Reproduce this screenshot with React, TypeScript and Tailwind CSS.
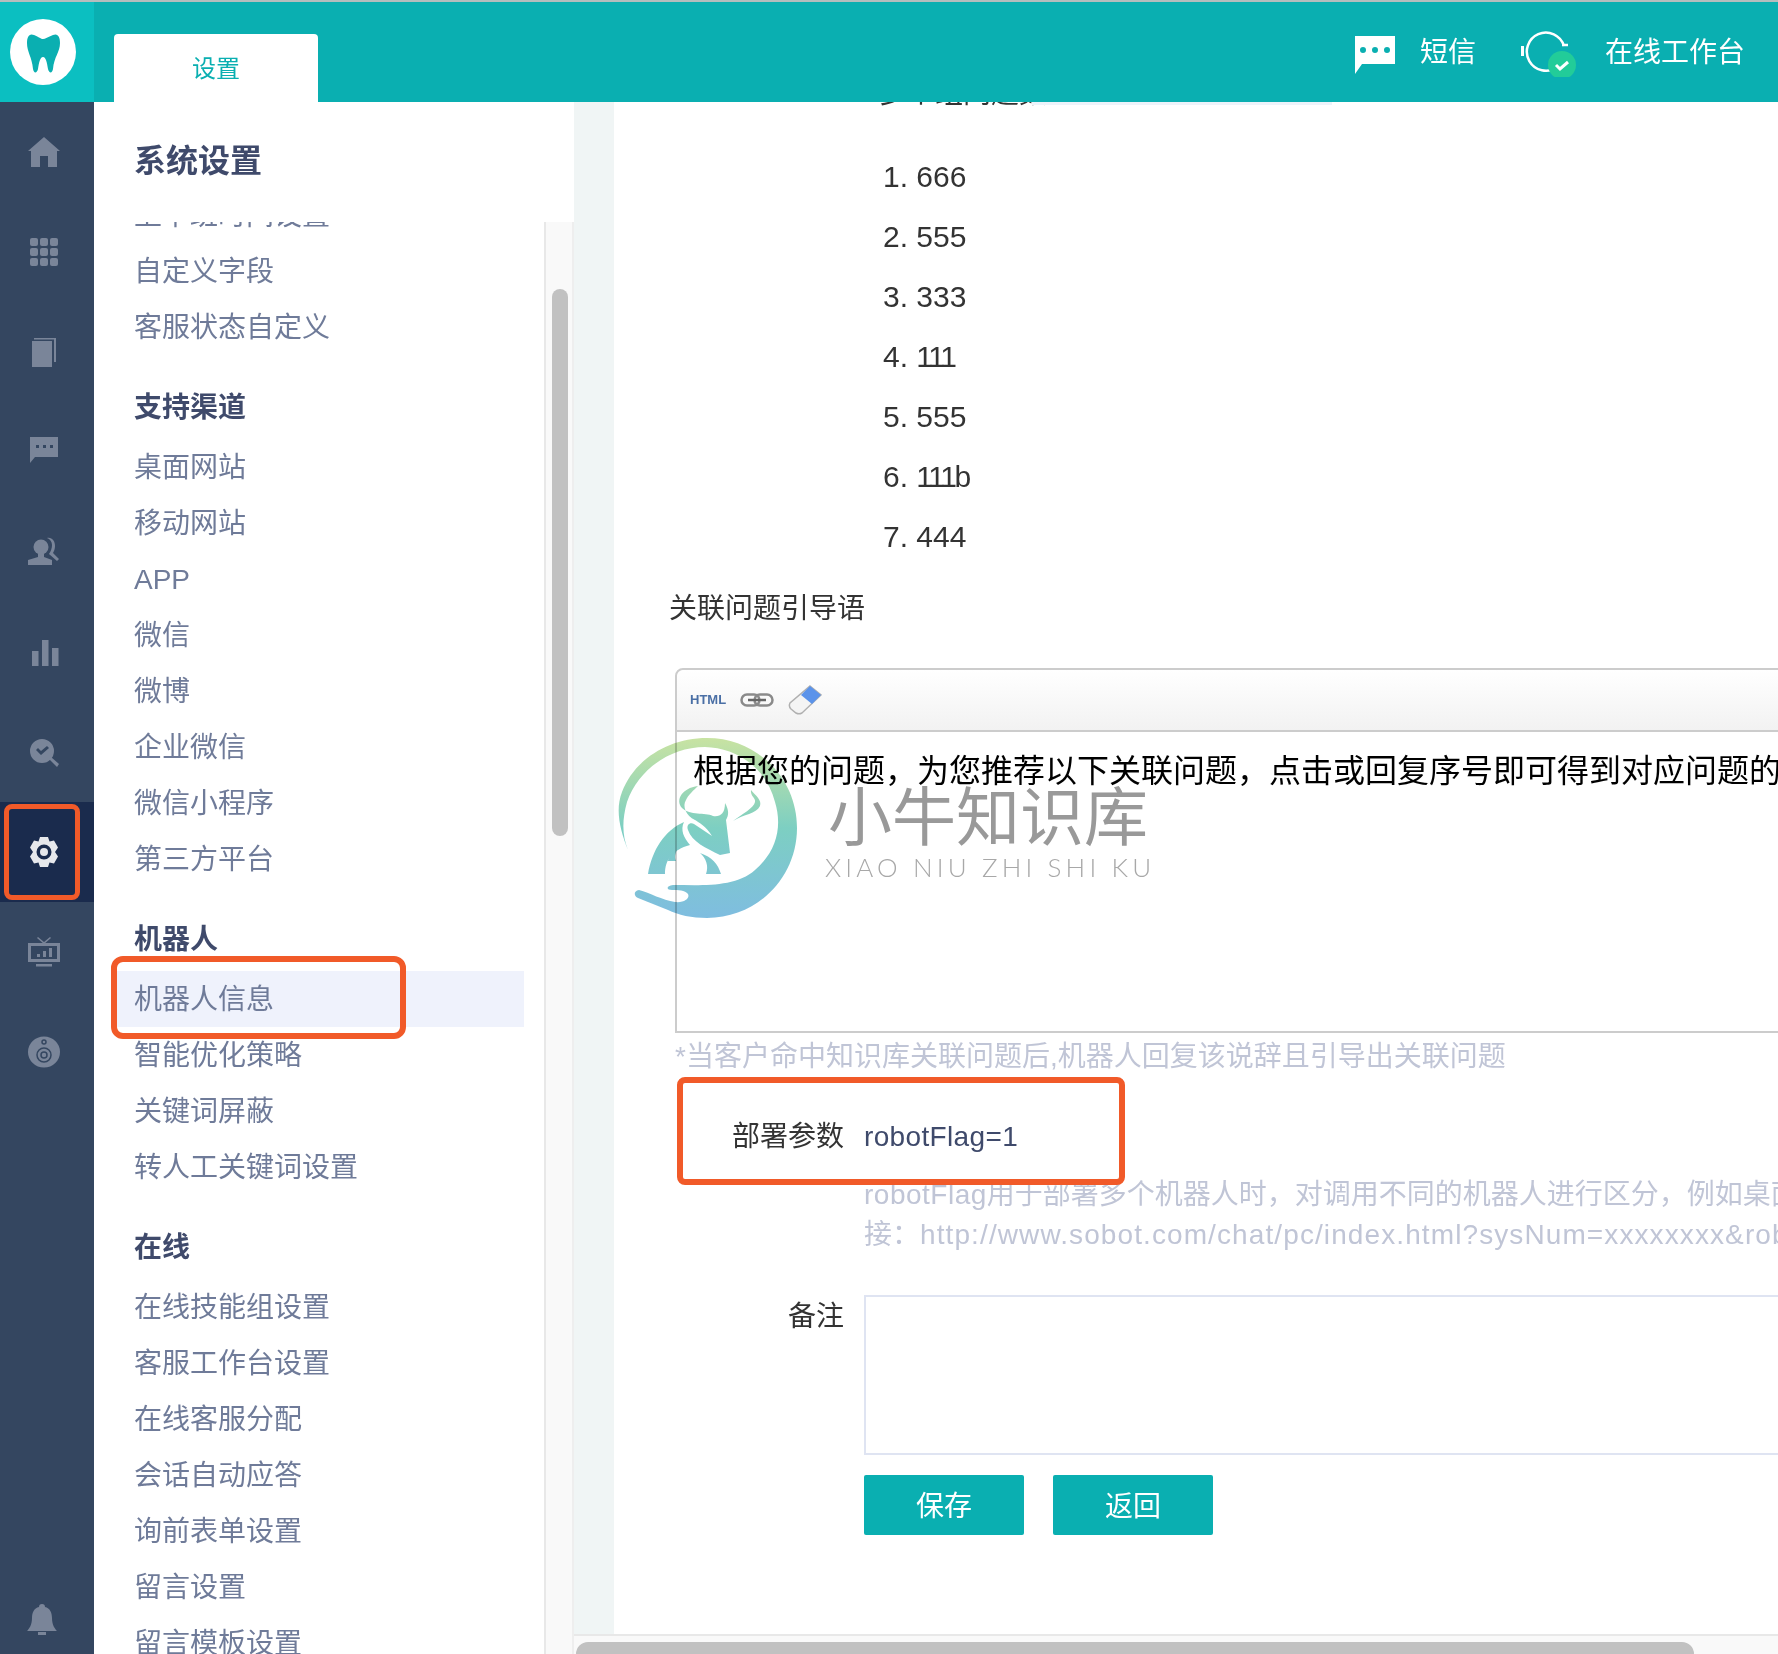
import React from 'react';

const groups = [
  { items: ['上下班时间设置', '自定义字段', '客服状态自定义'] },
  { title: '支持渠道', items: ['桌面网站', '移动网站', 'APP', '微信', '微博', '企业微信', '微信小程序', '第三方平台'] },
  { title: '机器人', items: ['机器人信息', '智能优化策略', '关键词屏蔽', '转人工关键词设置'] },
  { title: '在线', items: ['在线技能组设置', '客服工作台设置', '在线客服分配', '会话自动应答', '询前表单设置', '留言设置', '留言模板设置'] },
];

const questions = ['666', '555', '333', '111', '555', '111b', '444'];

function NavIcon({ children, active }: { children: React.ReactNode; active?: boolean }) {
  return (
    <div className={active ? 'relative h-[100px] flex items-center justify-center pr-[6px] bg-[#1a2b4d] text-[#e6e8ec]' : 'relative h-[100px] flex items-center justify-center pr-[6px] text-[#7a8599]'}>
      <svg viewBox="0 0 32 32" className="size-8" fill="currentColor">{children}</svg>
      {active && <div className="absolute left-[4px] top-[2px] w-[76px] h-[96px] border-[5px] border-[#f15a29] rounded-lg" />}
    </div>
  );
}

function Sidebar() {
  return (
    <aside className="w-[94px] shrink-0 bg-[#344660] flex flex-col">
      <NavIcon><path d="M16 1 32 15h-3v16h-9V20h-8v11H3V15H0Z" /></NavIcon>
      <NavIcon>
        <rect x="2" y="2" width="8" height="8" rx="2" /><rect x="12" y="2" width="8" height="8" rx="2" /><rect x="22" y="2" width="8" height="8" rx="2" />
        <rect x="2" y="12" width="8" height="8" rx="2" /><rect x="12" y="12" width="8" height="8" rx="2" /><rect x="22" y="12" width="8" height="8" rx="2" />
        <rect x="2" y="22" width="8" height="8" rx="2" /><rect x="12" y="22" width="8" height="8" rx="2" /><rect x="22" y="22" width="8" height="8" rx="2" />
      </NavIcon>
      <NavIcon><path d="M4 5h20v26H4Z" /><path d="M6 2h22v24h-2V3.500H6Z" /></NavIcon>
      <NavIcon><path d="M2 1h28v20H7l-5 6Z" /><g fill="#344660"><rect x="8" y="9" width="3" height="3" /><rect x="15" y="9" width="3" height="3" /><rect x="22" y="9" width="3" height="3" /></g></NavIcon>
      <NavIcon>
        <circle cx="13" cy="11" r="7.500" />
        <path d="M10 18h6v3l8 3v5H0v-5l10-3Z" />
        <path d="M19 2c5-1 8 3 8 8 0 3-1 5-2 7l6 6-2 2-8-7c2-3 3-6 3-9 0-3-2-6-5-7Z" />
      </NavIcon>
      <NavIcon><rect x="4" y="15" width="6.500" height="15" /><rect x="14" y="4" width="6.500" height="26" /><rect x="24" y="12" width="6.500" height="18" /></NavIcon>
      <NavIcon>
        <path fillRule="evenodd" d="M14 3a12 12 0 1 0 0 24 12 12 0 0 0 0-24Zm-6 11 2-2 3 3 6-5 2 2-8 7Z" />
        <path d="m21 23 2-2 8 7-2 3Z" />
      </NavIcon>
      <NavIcon active>
        <path fillRule="evenodd" d="M12 1h8l1.500 4.500 4.500-1 4 7-3 4.500 3 4.500-4 7-4.500-1L20 31h-8l-1.500-4.500-4.500 1-4-7 3-4.500-3-4.500 4-7 4.500 1ZM16 8.500a7.500 7.500 0 1 0 0 15 7.500 7.500 0 0 0 0-15Z" />
        <circle cx="16" cy="16" r="4" />
      </NavIcon>
      <NavIcon>
        <path fillRule="evenodd" d="M0 7h32v19H0Zm3 3v13h26V10Z" />
        <path d="m10 1 6 5 6-5 1 1-7 6-7-6Z" /><rect x="8" y="28" width="16" height="2.500" />
        <rect x="9" y="18" width="3" height="3" /><rect x="15" y="15" width="3" height="6" /><rect x="21" y="12" width="3" height="9" />
      </NavIcon>
      <NavIcon>
        <ellipse cx="16" cy="16" rx="16" ry="15.500" />
        <g fill="none" stroke="#344660" strokeWidth="1.500">
          <circle cx="16" cy="19" r="7" /><circle cx="16" cy="19" r="3" /><circle cx="16" cy="6" r="2" />
        </g>
      </NavIcon>
      <div className="mt-auto mb-[4px] h-[60px] flex items-center pl-[26px] text-[#7a8599]">
        <svg viewBox="0 0 32 32" className="size-8" fill="currentColor">
          <path d="M16 0c2 0 3 1 3 3 5 1 7 6 7 11 0 7 3 11 5 13H1c2-2 5-6 5-13 0-5 2-10 7-11 0-2 1-3 3-3Z" />
          <rect x="12" y="28" width="8" height="3" />
        </svg>
      </div>
    </aside>
  );
}

function SettingsMenu() {
  return (
    <div className="w-[480px] shrink-0 bg-white flex flex-col overflow-hidden">
      <div className="h-[120px] shrink-0 pl-10 pt-[39px] text-[32px] leading-10 font-bold text-[#3f4a6b]">系统设置</div>
      <div className="flex-1 flex min-h-0">
        <div className="w-[450px] px-5 overflow-hidden">
          <div className="-mt-[35px]">
            {groups.map((g, i) => (
              <div key={i} className={g.title ? 'mt-9' : ''}>
                {g.title && <div className="h-8 mb-4 pl-5 text-[28px] leading-[34px] font-bold text-[#3f4a6b]">{g.title}</div>}
                {g.items.map((item) => (
                  <div key={item} className={item === '机器人信息' ? 'relative h-14 pl-5 text-[28px] leading-[58px] text-[#6f7b99] bg-[#eff2fc]' : 'h-14 pl-5 text-[28px] leading-[58px] text-[#6f7b99]'}>
                    {item}
                    {item === '机器人信息' && <div className="absolute -left-[3px] -top-[15px] w-[295px] h-[83px] border-[6px] border-[#f15a29] rounded-xl" />}
                  </div>
                ))}
              </div>
            ))}
          </div>
        </div>
        <div className="w-[30px] bg-[#f9f9f9] border-l-2 border-r-2 border-l-[#e8e8e8] border-r-[#eeeeee] pt-[67px] pl-[6px]">
          <div className="w-4 h-[547px] rounded-full bg-[#c1c1c1]" />
        </div>
      </div>
    </div>
  );
}

function Main() {
  return (
    <main className="flex-1 min-w-0 flex flex-col bg-[#f0f5f5]">
      <div className="flex-1 min-h-0 pl-10">
        <div className="relative h-full bg-white overflow-hidden text-[28px] text-[#333333]">
          <div className="absolute left-[418px] top-0 w-[300px] h-[3px] bg-[#edf3fa]" />
          <div className="-mt-10 ml-[265px] h-[60px] leading-[64px] mb-[25px] whitespace-nowrap">多个组问题数</div>
          <ol className="ml-[269px] text-[30px]">
            {questions.map((q, i) => (
              <li key={i} className="h-[60px] leading-[60px]">
                {i + 1}. <span className={q.startsWith('111') ? 'tracking-[-2.500px]' : ''}>{q}</span>
              </li>
            ))}
          </ol>
          <div className="mt-5 ml-[55px] h-10 leading-[44px]">关联问题引导语</div>
          <div className="mt-[41px] ml-[61px] w-[1200px] h-[365px] border-2 border-[#cccccc] rounded-tl-lg">
            <div className="h-[62px] flex items-center pl-[13px] bg-gradient-to-b from-white to-[#f2f2f2] border-b-2 border-[#cccccc] rounded-tl-lg">
              <span className="text-[13px] leading-4 font-bold text-[#4a6fa5]">HTML</span>
              <svg viewBox="0 0 34 14" className="ml-[14px] w-[34px] h-[14px]" fill="none" stroke="#8a8a8a" strokeWidth="2.500">
                <rect x="1.500" y="1.500" width="18" height="11" rx="5.500" />
                <rect x="14.500" y="1.500" width="18" height="11" rx="5.500" />
                <path d="M8 7h18" stroke="#666666" />
              </svg>
              <svg viewBox="0 0 34 30" className="ml-[14px] w-[34px] h-[30px]">
                <path d="M22 1 33 10 14 28c-2 1-4 1-6 0l-5-4c-2-2-2-4-1-6Z" fill="#f4f4f4" stroke="#b0b0b0" strokeWidth="1.500" />
                <path d="M22 1 33 10 24 19 13 10Z" fill="#5b93ea" />
              </svg>
            </div>
            <div className="pl-4 pt-[19px] text-[32px] leading-10 text-black whitespace-nowrap">根据您的问题，为您推荐以下关联问题，点击或回复序号即可得到对应问题的答案</div>
          </div>
          <div className="mt-[2px] ml-[61px] h-10 leading-[44px] text-[#c0c5d6] whitespace-nowrap">*当客户命中知识库关联问题后,机器人回复该说辞且引导出关联问题</div>
          <div className="relative mt-[30px] h-[60px] pt-[3px] flex items-center">
            <div className="w-[230px] text-right">部署参数</div>
            <div className="ml-5 text-[#3f4a6b] tracking-[0.350px]">robotFlag=1</div>
            <div className="absolute left-[63px] -top-[28px] w-[448px] h-[108px] border-[6px] border-[#f15a29] rounded-lg" />
          </div>
          <div className="mt-[10px] ml-[250px] leading-10 text-[#c0c5d6] whitespace-nowrap">
            <div><span className="tracking-[0.500px]">robotFlag</span>用于部署多个机器人时，对调用不同的机器人进行区分，例如桌面网站链</div>
            <div>接：<span className="tracking-[1.100px]">http://www.sobot.com/chat/pc/index.html?sysNum=xxxxxxxx&amp;robotFlag=1</span></div>
          </div>
          <div className="mt-[40px] flex">
            <div className="w-[230px] shrink-0 text-right leading-[44px]">备注</div>
            <div className="ml-5 w-[1000px] shrink-0 h-[160px] border-2 border-[#dfe4f2]" />
          </div>
          <div className="mt-5 ml-[250px] flex gap-[29px]">
            <button className="w-40 h-[60px] pt-1 rounded-[2px] bg-[#0aafb1] text-white">保存</button>
            <button className="w-40 h-[60px] pt-1 rounded-[2px] bg-[#0aafb1] text-white">返回</button>
          </div>
        </div>
      </div>
      <div className="h-5 shrink-0 bg-[#f9f9f9] border-t-2 border-[#e8e8e8] pt-[6px] pl-[2px]">
        <div className="w-[1118px] h-3 rounded-t-full bg-[#c1c1c1]" />
      </div>
    </main>
  );
}

function Watermark() {
  return (
    <div className="absolute left-[610px] top-[730px] w-[560px] h-[200px] pointer-events-none">
      <svg viewBox="0 0 200 200" className="absolute left-0 top-0 size-[200px] mix-blend-multiply">
        <defs>
          <linearGradient id="wm" gradientUnits="userSpaceOnUse" x1="0" y1="8" x2="0" y2="188">
            <stop offset="0" stopColor="#c8e3a2" />
            <stop offset="0.5" stopColor="#7dcfc2" />
            <stop offset="1" stopColor="#7fbde0" />
          </linearGradient>
        </defs>
        <g fill="url(#wm)">
          <path d="M18 120C10 100 5 80 12 62 24 30 58 8 97 8c50 0 90 40 90 90s-40 90-90 90c-15 0-29-3-39-8l-30-12c-4-2-5-7 1-8 11 3 23 10 36 12 10 1 15-4 13-8-3-4-10-4-16-4s-6-4 1-5c27 0 62 3 82-15 23-20 27-45 20-68C155 35 125 18 95 17 60 17 28 40 17 72c-5 18-5 33 1 48Z" />
          <path d="M88 56C72 58 65 70 72 78c8 8 23 4 31 8 7 1 12-2 12-13 4 7 4 12 1 17l4 33-10 2c-14-7-28-13-32-25-2-5 2-8 6-6 6 4 12 8 18 12-6-10-14-14-17-16-9-4-13-14-9-20 2-5 8-10 12-14Z" />
          <path d="M74 92C55 100 42 120 38 144h17c0-14 7-24 25-29-6-7-10-15-6-23Z" />
          <path d="M68 118c-6 4-10 10-10 13h8c-2-5 0-9 2-13Z" />
          <path d="M90 123c6 5 9 13 6 21h15c-3-10-9-17-21-21Z" />
          <path d="M141 60c5 6 11 10 9 16-4 8-16 8-27 15 9-7 21-13 22-19 1-4-5-6-4-12Z" />
        </g>
      </svg>
      <div className="absolute left-[218px] top-[48px] w-[320px] text-[64px] leading-[80px] text-[#999999] whitespace-nowrap">小牛知识库</div>
      <div className="absolute left-[215px] top-[122px] font-['Lato',sans-serif] font-light text-[26px] leading-[30px] tracking-[4.150px] text-[#a8a8a8] whitespace-nowrap">XIAO NIU ZHI SHI KU</div>
    </div>
  );
}

export default function App() {
  return (
    <div className="relative w-[1778px] h-[1654px] overflow-hidden flex flex-col bg-white font-['Liberation_Sans','Noto_Sans_CJK_SC',sans-serif]">
      <header className="h-[102px] shrink-0 border-t-2 border-[#b5bdbd] bg-[#0aafb1] flex">
        <div className="w-[94px] bg-[#0bbfc1] flex items-center pl-[10px]">
          <div className="size-[66px] rounded-full bg-white">
            <svg viewBox="0 0 66 66" className="size-[66px]" fill="#0aafb1">
              <path d="M24 16c-5-2-7 2-7 8 0 9 5 14 6 26 1 5 4 4 5 0 1-6 2-12 5-12s4 6 5 12c1 4 4 5 5 0 1-12 7-17 7-26 0-6-2-10-7-8-5 2-8 4-10 4s-4-2-9-4Z" />
            </svg>
          </div>
        </div>
        <div className="ml-5 mt-[32px] w-[204px] h-[68px] pt-[2px] rounded-t bg-white flex items-center justify-center text-[24px] text-[#0aafb1]">设置</div>
        <div className="ml-auto pr-[33px] flex items-center text-[28px] text-white">
          <svg viewBox="0 0 40 38" className="mt-[5px] w-10 h-[38px]" fill="white">
            <path fillRule="evenodd" d="M0 0h40v28H7l-7 10ZM8 11a3 3 0 1 0 0 6 3 3 0 0 0 0-6Zm12 0a3 3 0 1 0 0 6 3 3 0 0 0 0-6Zm12 0a3 3 0 1 0 0 6 3 3 0 0 0 0-6Z" />
          </svg>
          <span className="ml-[25px] pt-[2px]">短信</span>
          <svg viewBox="0 0 56 50" className="ml-[44px] w-14 h-[50px]">
            <path d="M37 40A19 19 0 1 1 44 19" fill="none" stroke="white" strokeWidth="2.500" />
            <rect x="1" y="19" width="3" height="10" fill="white" />
            <path d="M42 18h6" stroke="white" strokeWidth="2.500" />
            <circle cx="42" cy="38" r="14" fill="#22cc99" />
            <path d="m36 38 4 4 8-7" fill="none" stroke="white" strokeWidth="3" />
          </svg>
          <span className="ml-[29px] pt-[2px]">在线工作台</span>
        </div>
      </header>
      <div className="flex-1 min-h-0 flex">
        <Sidebar />
        <SettingsMenu />
        <Main />
      </div>
      <Watermark />
    </div>
  );
}
